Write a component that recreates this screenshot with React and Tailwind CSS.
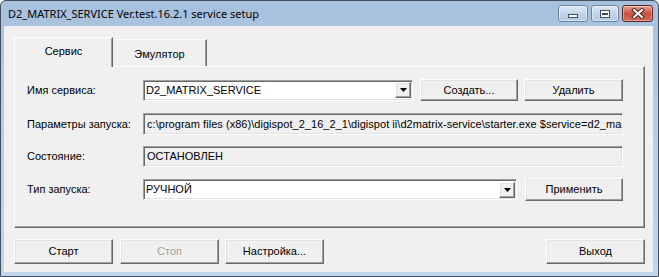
import React from "react";

const raised =
  "bg-[#f0f0f0] border border-[#696969] border-t-white border-l-white shadow-[inset_-1px_-1px_0_#a0a0a0,inset_1px_1px_0_#e3e3e3]";
const sunken =
  "border border-white border-t-[#a0a0a0] border-l-[#a0a0a0] shadow-[inset_1px_1px_0_#696969,inset_-1px_-1px_0_#e3e3e3]";

function Button({ label, className = "", disabled = false }) {
  return (
    <div
      className={`${raised} flex items-center justify-center ${
        disabled ? "text-[#a0a0a0]" : "text-black"
      } ${className}`}
    >
      {label}
    </div>
  );
}

function Combo({ value, className = "" }) {
  return (
    <div className={`${sunken} bg-white flex items-center ${className}`}>
      <span className="flex-1 pl-[2px] truncate">{value}</span>
      <div className={`${raised} w-[16px] h-[16px] mr-[1px] flex items-center justify-center`}>
        <svg width="7" height="4" viewBox="0 0 7 4">
          <path d="M0 0h7L3.5 4z" fill="#000" />
        </svg>
      </div>
    </div>
  );
}

function Field({ value, className = "" }) {
  return (
    <div className={`${sunken} bg-[#f0f0f0] flex items-center pl-[3px] whitespace-nowrap overflow-hidden ${className}`}>
      {value}
    </div>
  );
}

function CaptionButtons() {
  return (
    <div className="flex items-start gap-[3px] pt-[4px] pr-[5px]">
      <div className="w-[30px] h-[17px] rounded-[3px] border border-[#6c83a1] bg-gradient-to-b from-[#dfe9f5] via-[#c2d4ea] to-[#b2c8e3] shadow-[inset_0_0_0_1px_rgba(255,255,255,0.5)] flex items-end justify-center pb-[3px]">
        <div className="w-[10px] h-[4px] bg-white border border-[#3c4c62]" />
      </div>
      <div className="w-[28px] h-[17px] rounded-[3px] border border-[#6c83a1] bg-gradient-to-b from-[#dfe9f5] via-[#c2d4ea] to-[#b2c8e3] shadow-[inset_0_0_0_1px_rgba(255,255,255,0.5)] flex items-center justify-center">
        <div className="w-[10px] h-[8px] border border-[#3c4c62] bg-white flex items-center justify-center">
          <div className="w-[6px] h-[2px] border border-[#3c4c62] bg-[#c2d4ea]" />
        </div>
      </div>
      <div className="w-[31px] h-[17px] rounded-[3px] border border-[#5e2a24] bg-gradient-to-b from-[#e4a596] via-[#c9503f] to-[#d36d5c] shadow-[inset_0_0_0_1px_rgba(255,255,255,0.35)] flex items-center justify-center">
        <svg width="14" height="11" viewBox="0 0 14 11">
          <path d="M3 2l8 7M11 2l-8 7" stroke="#4a2420" strokeWidth="4" strokeLinecap="square" />
          <path d="M3 2l8 7M11 2l-8 7" stroke="#fff" strokeWidth="2" strokeLinecap="square" />
        </svg>
      </div>
    </div>
  );
}

export default function App() {
  return (
    <div className="w-[659px] h-[277px] bg-white font-['Liberation_Sans',Arial,sans-serif] text-[11px] text-black">
      <div className="w-full h-full flex flex-col rounded-t-[6px] border border-[#434f5e] bg-gradient-to-b from-[#a6c0dd] via-[#b9cfe8] to-[#c2d6ec] overflow-hidden">
        <div className="h-[25px] flex items-start justify-between shrink-0">
          <span className="pl-[7px] pt-[5px] font-['Noto_Sans','Open_Sans',sans-serif] text-[11px] leading-[15px] text-black">
            D2_MATRIX_SERVICE Ver.test.16.2.1 service setup
          </span>
          <CaptionButtons />
        </div>

        <div className="flex-1 ml-[3px] mr-[5px] mb-[4px] bg-[#f0f0f0] flex flex-col">
          <div className="mt-[11px] ml-[10px] h-[29px] flex items-end">
            <div className="relative z-10 w-[99px] h-[30px] -mb-[1px] bg-[#f0f0f0] border border-t-white border-l-white border-r-[#696969] border-b-0 shadow-[inset_-1px_0_0_#a0a0a0] flex items-center justify-center pb-[2px]">
              Сервис
            </div>
            <div className="w-[94px] h-[27px] border border-t-white border-l-0 border-r-[#696969] border-b-0 shadow-[inset_-1px_0_0_#a0a0a0] flex items-center justify-center pt-[2px]">
              Эмулятор
            </div>
          </div>

          <div className="ml-[10px] w-[631px] h-[162px] border border-[#696969] border-t-white border-l-white shadow-[inset_-1px_-1px_0_#a0a0a0] pt-[12px] pl-[12px] flex flex-col">
            <div className="h-[22px] flex items-center">
              <span className="w-[116px]">Имя сервиса:</span>
              <Combo value="D2_MATRIX_SERVICE" className="w-[270px] h-[21px]" />
              <Button label="Создать..." className="ml-[7px] w-[98px] h-[22px]" />
              <Button label="Удалить" className="ml-[6px] w-[99px] h-[22px]" />
            </div>
            <div className="mt-[12px] h-[22px] flex items-center">
              <span className="w-[116px]">Параметры запуска:</span>
              <Field
                value="c:\program files (x86)\digispot_2_16_2_1\digispot ii\d2matrix-service\starter.exe $service=d2_ma"
                className="w-[480px] h-[22px] tracking-[0.04px]"
              />
            </div>
            <div className="mt-[11px] h-[21px] flex items-center">
              <span className="w-[116px]">Состояние:</span>
              <Field value="ОСТАНОВЛЕН" className="w-[480px] h-[21px]" />
            </div>
            <div className="mt-[11px] h-[23px] flex items-center">
              <span className="w-[116px]">Тип запуска:</span>
              <Combo value="РУЧНОЙ" className="w-[374px] h-[21px]" />
              <Button label="Применить" className="ml-[8px] w-[98px] h-[23px]" />
            </div>
          </div>

          <div className="mt-[11px] ml-[10px] w-[631px] flex items-center">
            <Button label="Старт" className="w-[99px] h-[25px]" />
            <Button label="Стоп" disabled className="ml-[7px] w-[99px] h-[25px]" />
            <Button label="Настройка..." className="ml-[6px] w-[99px] h-[25px]" />
            <div className="flex-1" />
            <Button label="Выход" className="w-[99px] h-[25px]" />
          </div>
        </div>
      </div>
    </div>
  );
}
